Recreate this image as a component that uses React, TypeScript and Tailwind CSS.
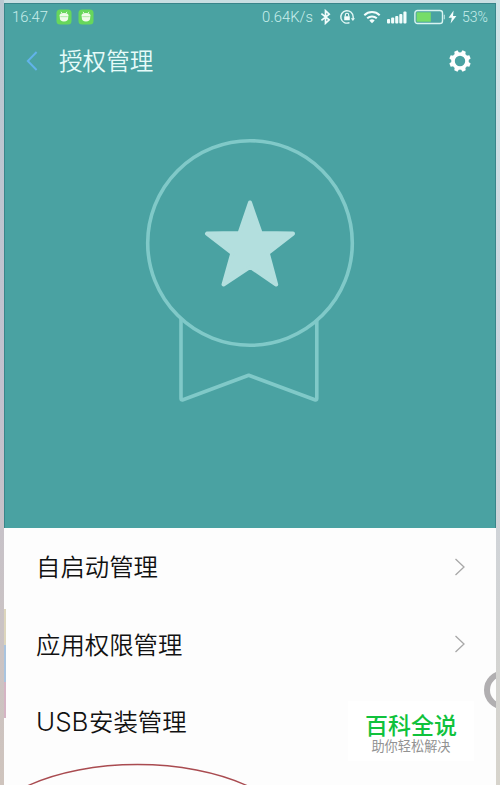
const ITEMS = [
  { label: '自启动管理', arrow: true },
  { label: '应用权限管理', arrow: true },
  { label: '安装管理', prefix: 'USB', arrow: false },
];

const SIGNAL_BARS = [4.5, 6, 7.5, 9.5, 12];

const GEAR_TEETH = [22.5, 67.5, 112.5, 157.5, 202.5, 247.5, 292.5, 337.5];

function AppBadge() {
  return (
    <svg width="16" height="16" viewBox="0 0 16 16" className="shrink-0" aria-hidden>
      <rect x="0.5" y="0.5" width="15" height="15" rx="3.5" fill="#67d75b" />
      <path d="M3.4 7.2a4.6 3.3 0 0 1 9.2 0z" fill="#effbea" />
      <path d="M3.8 7.2h8.4v1.6a4.2 3.8 0 0 1-8.4 0z" fill="#effbea" />
      <path d="M5 2.8l1.2 1.8M11 2.8L9.8 4.6" stroke="#effbea" strokeWidth="0.9" />
      <path d="M4.5 7.7h7" stroke="#9be490" strokeWidth="0.6" />
    </svg>
  );
}

function BluetoothIcon() {
  return (
    <svg width="12" height="16" viewBox="0 0 12 16" className="ml-[7px] shrink-0" fill="none" aria-hidden>
      <path d="M1.4 4.7l7.8 6.2-3.7 3.4V1.7l3.7 3.4-7.8 6.2" stroke="#f2fdfc" strokeWidth="1.7" />
    </svg>
  );
}

function RotationLock() {
  return (
    <svg width="16" height="16" viewBox="0 0 16 16" className="ml-[7px] shrink-0" fill="none" aria-hidden>
      <path d="M10.5 13.6A6.2 6.2 0 1 1 14.2 8v2" stroke="#e2f7f5" strokeWidth="1.4" />
      <path d="M11.8 9.2h4.2l-2.1 2.8z" fill="#e2f7f5" />
      <rect x="5.2" y="7.2" width="5.6" height="4" rx="0.5" fill="#f2fdfc" />
      <path d="M6.3 7.4V6a1.7 1.7 0 0 1 3.4 0v1.4" stroke="#f2fdfc" strokeWidth="1.1" />
    </svg>
  );
}

function WifiIcon() {
  return (
    <svg width="18" height="14" viewBox="0 0 18 14" className="ml-[8px] shrink-0" fill="none" aria-hidden>
      <path d="M1.3 5.2a11 11 0 0 1 15.4 0" stroke="#f2fdfc" strokeWidth="2" />
      <path d="M4.2 8.3a7 7 0 0 1 9.6 0" stroke="#f2fdfc" strokeWidth="2" />
      <path d="M9 13.3L6.3 10.4a4 4 0 0 1 5.4 0z" fill="#f2fdfc" />
    </svg>
  );
}

function Battery() {
  return (
    <svg width="32" height="16" viewBox="0 0 32 16" className="ml-[7px] shrink-0" fill="none" aria-hidden>
      <rect x="0.9" y="1.5" width="27.6" height="13" rx="2.6" stroke="#d9f4f1" strokeWidth="1.4" />
      <rect x="2.6" y="3.3" width="14.2" height="9.4" fill="#76dc69" />
      <path d="M29.8 5.7h0.9v4.6h-0.9z" fill="#d9f4f1" />
    </svg>
  );
}

function StatusBar() {
  return (
    <div className="flex h-[26px] items-center pl-[7px] pr-[6px] font-['Roboto',sans-serif] text-[14.8px] font-light text-[#c8eeeb]">
      <span className="w-[44px] whitespace-nowrap">16:47</span>
      <AppBadge />
      <span className="w-[6px]" />
      <AppBadge />
      <span className="ml-auto whitespace-nowrap">0.64K/s</span>
      <BluetoothIcon />
      <RotationLock />
      <WifiIcon />
      <svg width="20" height="13" viewBox="0 0 20 13" className="ml-[6px] shrink-0" fill="#f2fdfc" aria-hidden>
        {SIGNAL_BARS.map((height, i) => (
          <rect key={height} x={i * 4.1} y={12.5 - height} width="3.1" height={height} rx="1" />
        ))}
      </svg>
      <Battery />
      <svg width="9" height="14" viewBox="0 0 9 14" className="ml-[2px] shrink-0" fill="#f2fdfc" aria-hidden>
        <path d="M5.6 0.5L0.6 7.8h3.2L2.6 13.5l5.8-7.6H5z" />
      </svg>
      <span className="ml-[5px] w-[27px] whitespace-nowrap text-[14px]">53%</span>
    </div>
  );
}

function Gear() {
  return (
    <svg width="22" height="22" viewBox="-11 -11 22 22" aria-hidden>
      <circle r="7" fill="none" stroke="#fff" strokeWidth="3.6" />
      {GEAR_TEETH.map((angle) => (
        <path key={angle} d="M-2.4-8L-1.7-10.8H1.7L2.4-8z" fill="#fff" transform={`rotate(${angle})`} />
      ))}
    </svg>
  );
}

function Medal() {
  return (
    <svg width="212" height="268" viewBox="144 137 212 268" fill="none" aria-hidden>
      <g stroke="#80c9c8" strokeWidth="3.6" strokeLinejoin="round">
        <circle cx="250" cy="243" r="102.3" />
        <path d="M181 319V398.5Q181 400.5 183 399.8L248.7 375.3L314.8 399.8Q316.8 400.5 316.8 398.5V320" />
      </g>
      <path
        d="M250 202.5L260.6 232.9L293 233.6L267.8 253.2L276.2 284.5L250.2 266.8L223.5 284.5L232.3 253.2L207 233.6L239.6 232.9Z"
        fill="#b3dfde"
        stroke="#b3dfde"
        strokeWidth="4"
        strokeLinejoin="round"
      />
    </svg>
  );
}

function RowArrow() {
  return (
    <svg width="12" height="18" viewBox="0 0 12 18" className="shrink-0" fill="none" aria-hidden>
      <path d="M1.5 1L10 9l-8.5 8" stroke="#a8a8a8" strokeWidth="1.3" />
    </svg>
  );
}

export default function App() {
  return (
    <div className="relative flex h-[785px] w-[500px] overflow-hidden bg-[#c9dfe2] pt-[3px] font-['Noto_Sans_CJK_SC_DemiLight','Noto_Sans_CJK_SC',sans-serif]">
      <div className="-mt-[3px] w-1 shrink-0 bg-gradient-to-b from-[#b9c9d2] via-[#c3c1ce] to-[#cfc4bd]" />
      <main className="flex w-[492px] shrink-0 flex-col bg-[#fdfdfd]">
        <header className="flex h-[525px] flex-col border-t border-r border-l border-[#39858a] bg-[#4aa2a2]">
          <StatusBar />
          <div className="flex h-[62px] items-center pl-[21px] pr-6">
            <svg width="13" height="22" viewBox="0 0 13 22" fill="none" aria-hidden>
              <path d="M10.6 2L1.8 11l8.8 9" stroke="#62b3ea" strokeWidth="1.9" />
            </svg>
            <h1 className="ml-[20px] text-[23.6px] font-[350] leading-none text-[#e6fbf9]">授权管理</h1>
            <span className="ml-auto">
              <Gear />
            </span>
          </div>
          <div className="mt-[45px] flex justify-center">
            <Medal />
          </div>
        </header>
        <ul className="text-[24.4px] font-[350] text-[#111]">
          {ITEMS.map((item) => (
            <li key={item.label} className="flex h-[77.5px] items-center justify-between pl-8 pr-[30px]">
              <span className="flex items-baseline">
                {item.prefix && (
                  <span className="w-[53px] font-['Inter',sans-serif] text-[26px] font-light leading-none">
                    {item.prefix}
                  </span>
                )}
                {item.label}
              </span>
              {item.arrow && <RowArrow />}
            </li>
          ))}
        </ul>
      </main>
      <div className="-mt-[3px] w-1 shrink-0 bg-gradient-to-b from-[#cfe5e8] via-[#ccd3de] to-[#d7d4cc]" />

      {/* window edges showing behind the phone */}
      <div className="absolute left-1 top-[609px] flex w-[2px] flex-col">
        <span className="h-9 bg-[#ddd6bd]" />
        <span className="h-[37px] bg-[#a9c4df]" />
        <span className="h-9 bg-[#d5b4c4]" />
      </div>
      <svg className="absolute left-[480px] top-[666px]" width="16" height="48" viewBox="480 666 16 48" fill="none" aria-hidden>
        <circle cx="503.5" cy="690" r="16.5" stroke="#b1afb1" strokeWidth="6" />
      </svg>
      <svg className="absolute left-0 top-[755px]" width="300" height="30" viewBox="0 755 300 30" fill="none" aria-hidden>
        <ellipse cx="137.5" cy="842.5" rx="160" ry="78" stroke="#a94b50" strokeWidth="1.4" />
      </svg>
      <div className="absolute left-[348px] top-[701px] flex h-[60px] w-[126px] flex-col items-center bg-white pt-[10px] font-['Noto_Sans_CJK_SC',sans-serif]">
        <strong className="text-[23px] font-medium leading-[26px] text-[#10c23c]">百科全说</strong>
        <span className="mt-px text-[13.2px] font-normal leading-4 text-[#929292]">助你轻松解决</span>
      </div>
    </div>
  );
}
